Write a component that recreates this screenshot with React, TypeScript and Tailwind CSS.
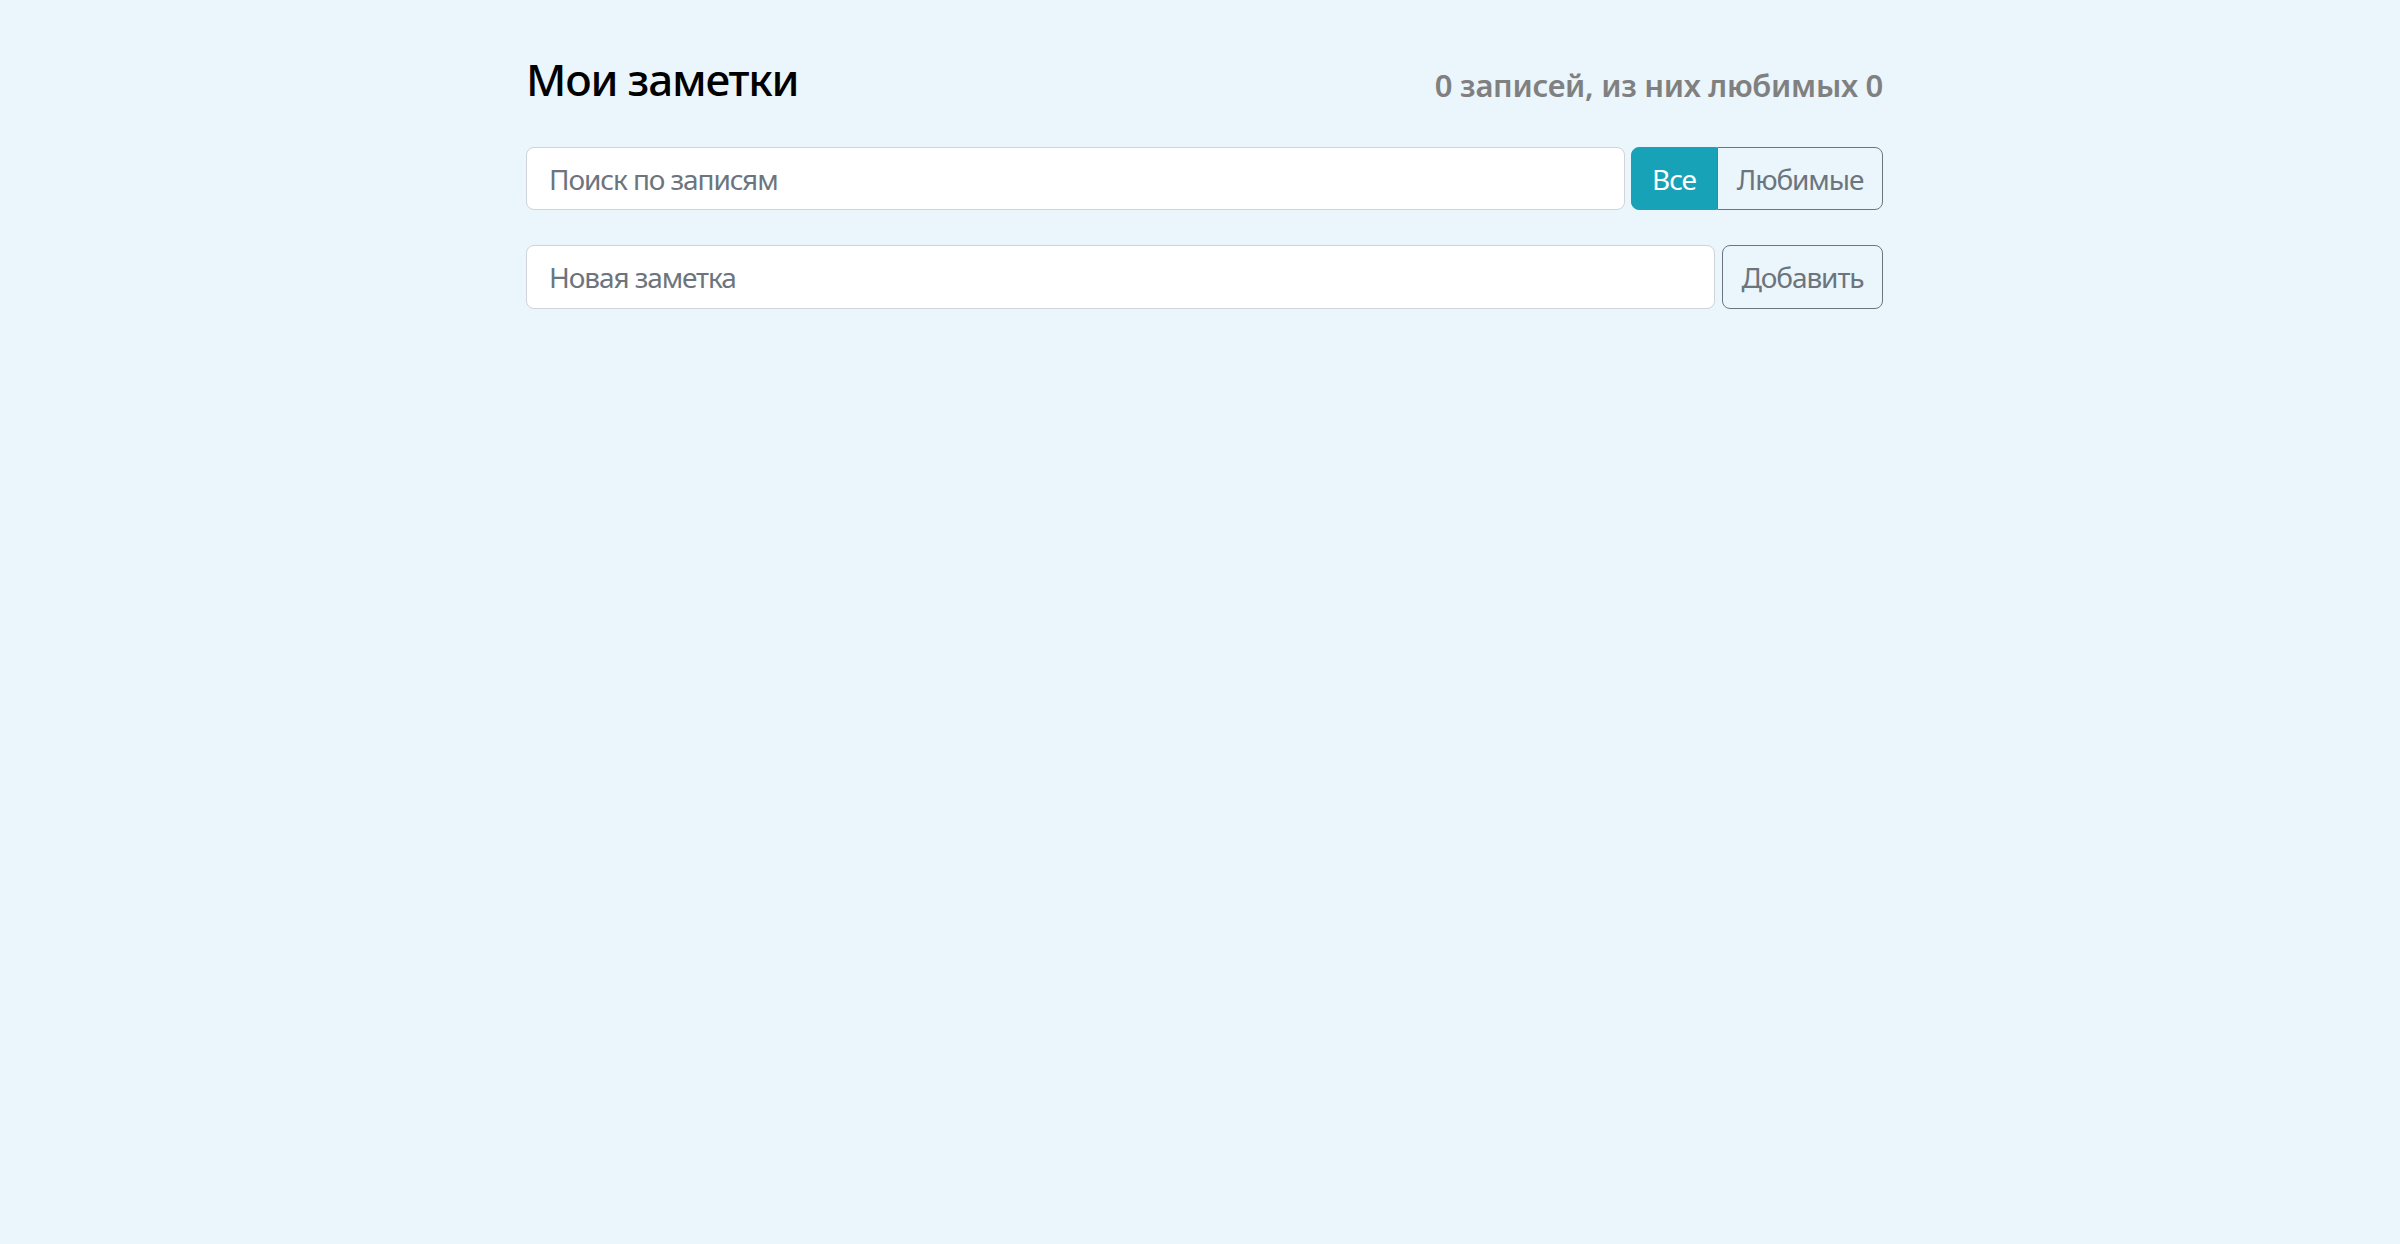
import React, { useState } from "react";

export default function App() {
  const [filter, setFilter] = useState<"all" | "fav">("all");
  const [search, setSearch] = useState("");
  const [draft, setDraft] = useState("");

  return (
    <div
      className="min-h-screen bg-[#eaf5fc] text-black"
      style={{ fontFamily: '"Noto Sans", "Open Sans", sans-serif' }}
    >
      <div className="ml-[526px] w-[1357px] pt-[50px]">
        {/* Header */}
        <div className="flex items-end justify-between">
          <h2 className="text-[44px] leading-[58px] font-medium tracking-[-1.2px]">Мои заметки</h2>
          <div className="mb-[3px] text-[31px] leading-[40px] font-semibold text-[#808080] tracking-[-0.3px]">
            0 записей, из них любимых 0
          </div>
        </div>

        {/* Search + filter */}
        <div className="mt-[39px] flex gap-[6px]">
          <input
            value={search}
            onChange={(e) => setSearch(e.target.value)}
            placeholder="Поиск по записям"
            className="h-[63px] flex-1 rounded-[8px] border border-[#ced4da] bg-white px-[22px] text-[28px] tracking-[-1.1px] text-[#212529] outline-none placeholder:text-[#6c757d]"
          />
          <div className="flex h-[63px]">
            <button
              onClick={() => setFilter("all")}
              className={
                filter === "all"
                  ? "w-[86px] rounded-l-[8px] border border-[#17a2b8] bg-[#17a2b8] text-[28px] tracking-[-1.1px] text-white"
                  : "w-[86px] rounded-l-[8px] border border-[#6c757d] text-[28px] tracking-[-1.1px] text-[#6c757d]"
              }
            >
              Все
            </button>
            <button
              onClick={() => setFilter("fav")}
              className={
                filter === "fav"
                  ? "w-[166px] rounded-r-[8px] border border-[#17a2b8] bg-[#17a2b8] text-[28px] tracking-[-1.1px] text-white"
                  : "w-[166px] rounded-r-[8px] border border-[#6c757d] text-[28px] tracking-[-1.1px] text-[#6c757d]"
              }
            >
              Любимые
            </button>
          </div>
        </div>

        {/* New note */}
        <div className="mt-[35px] flex gap-[7px]">
          <input
            value={draft}
            onChange={(e) => setDraft(e.target.value)}
            placeholder="Новая заметка"
            className="h-[64px] flex-1 rounded-[8px] border border-[#ced4da] bg-white px-[22px] text-[28px] tracking-[-1.1px] text-[#212529] outline-none placeholder:text-[#6c757d]"
          />
          <button className="h-[64px] w-[161px] rounded-[8px] border border-[#6c757d] text-[28px] tracking-[-1.1px] text-[#6c757d]">
            Добавить
          </button>
        </div>
      </div>
    </div>
  );
}
